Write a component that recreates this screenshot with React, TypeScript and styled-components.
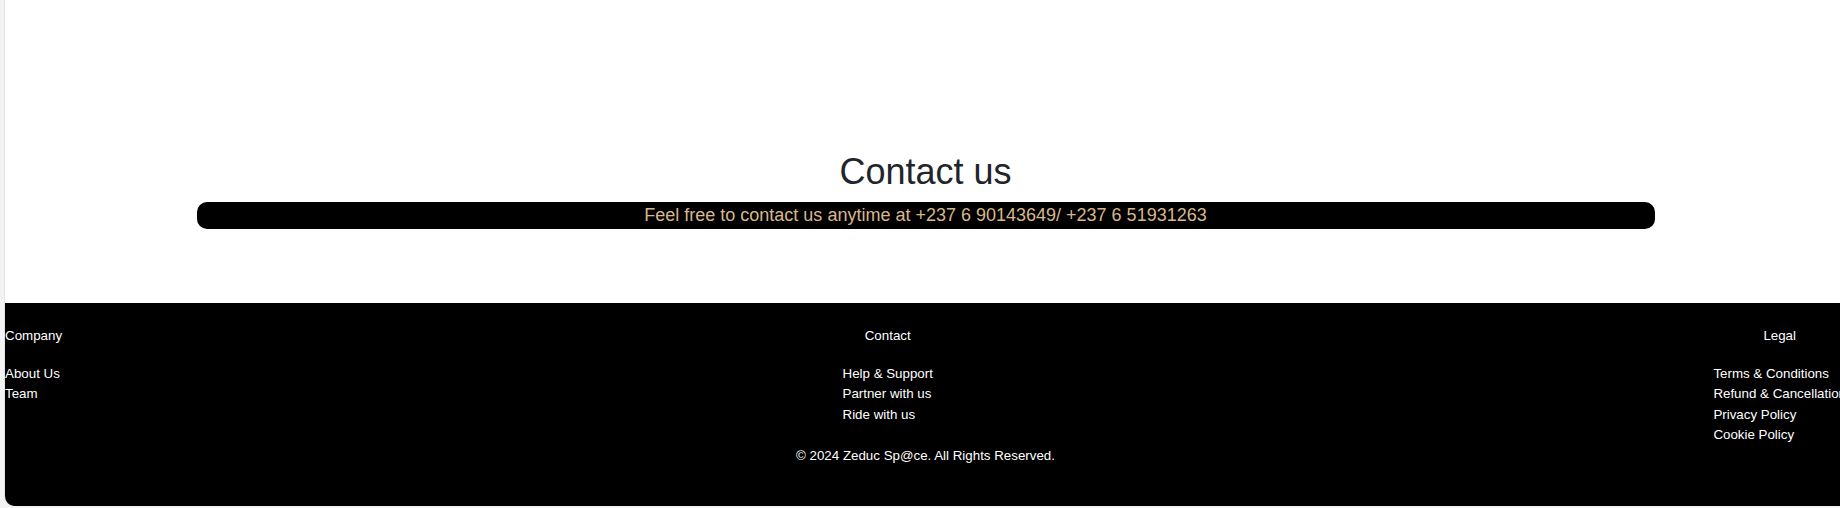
import React from "react";
import styled, { createGlobalStyle } from "styled-components";

const GlobalStyle = createGlobalStyle`
  html, body {
    margin: 0;
    padding: 0;
    overflow: hidden;
    background: #f3f3f3;
    font-family: "Liberation Sans", Arial, sans-serif;
  }
  * { box-sizing: border-box; }
`;

const Card = styled.div`
  margin: 0 0 2px 4px;
  width: 1842px;
  height: 506px;
  background: #ffffff;
  border-left: 1px solid #e4e4e4;
  border-bottom-left-radius: 10px;
  overflow: hidden;
  display: flex;
  flex-direction: column;
`;

const ContactSection = styled.section`
  padding: 150px 0 74px;
  display: flex;
  flex-direction: column;
  align-items: center;
`;

const Title = styled.h2`
  margin: 0 0 9px;
  font-size: 36px;
  line-height: 1.2;
  font-weight: 400;
  color: #212529;
  text-align: center;
`;

const InfoBar = styled.p`
  margin: 0;
  width: 1458px;
  height: 27px;
  background: #000000;
  border-radius: 10px;
  color: #d8b78d;
  font-size: 18px;
  line-height: 27px;
  text-align: center;
`;

const Footer = styled.footer`
  flex: 1;
  background: #000000;
  color: #ffffff;
  font-size: 13.33px;
  line-height: 20.3px;
  padding: 23px 0 0;
  display: flex;
  flex-direction: column;
`;

const Columns = styled.div`
  display: flex;
  justify-content: space-between;
  align-items: flex-start;
`;

const Column = styled.div`
  display: flex;
  flex-direction: column;
`;

const ColumnTitle = styled.h4`
  margin: 0 0 18px;
  font-size: 13.33px;
  line-height: 20px;
  font-weight: 400;
  text-align: center;
`;

const LinkList = styled.ul`
  margin: 0;
  padding: 0;
  list-style: none;
`;

const LinkItem = styled.li`
  white-space: nowrap;
  color: #ffffff;
`;

const Copyright = styled.p`
  margin: 1px 0 0;
  text-align: center;
  white-space: nowrap;
`;

const columns = [
  { title: "Company", links: ["About Us", "Team"] },
  { title: "Contact", links: ["Help & Support", "Partner with us", "Ride with us"] },
  {
    title: "Legal",
    links: ["Terms & Conditions", "Refund & Cancellation", "Privacy Policy", "Cookie Policy"],
  },
];

export default function App() {
  return (
    <>
      <GlobalStyle />
      <Card>
        <ContactSection>
          <Title>Contact us</Title>
          <InfoBar>Feel free to contact us anytime at +237 6 90143649/ +237 6 51931263</InfoBar>
        </ContactSection>
        <Footer>
          <Columns>
            {columns.map((c) => (
              <Column key={c.title}>
                <ColumnTitle>{c.title}</ColumnTitle>
                <LinkList>
                  {c.links.map((l) => (
                    <LinkItem key={l}>{l}</LinkItem>
                  ))}
                </LinkList>
              </Column>
            ))}
          </Columns>
          <Copyright>© 2024 Zeduc Sp@ce. All Rights Reserved.</Copyright>
        </Footer>
      </Card>
    </>
  );
}
